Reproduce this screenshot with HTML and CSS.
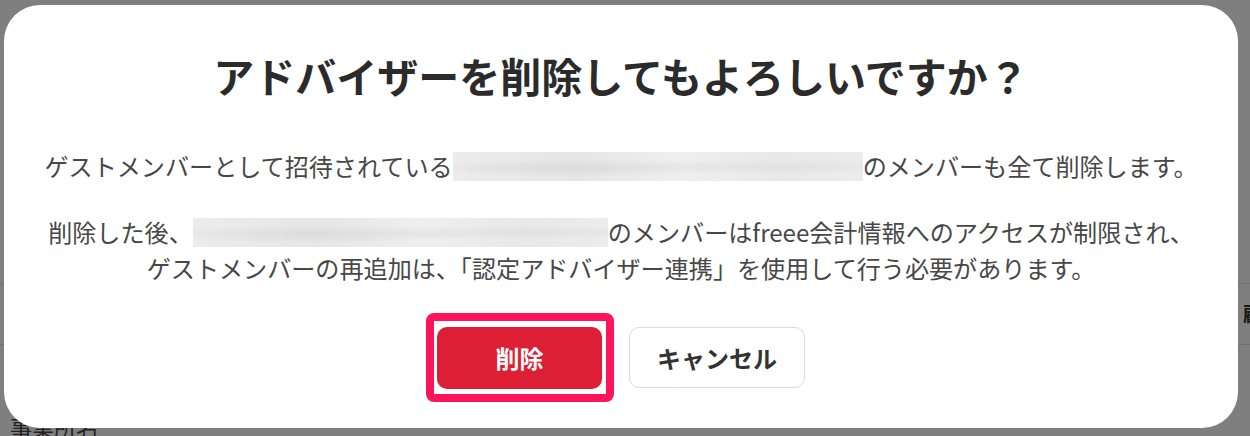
FILE: index.html
```html
<!DOCTYPE html>
<html lang="ja">
<head>
<meta charset="utf-8">
<title>アドバイザー削除</title>
<link rel="stylesheet" href="styles.css">
</head>
<body>
<div class="page">
  <div class="page-row">
    <div class="page-cell"></div>
    <div class="page-cell page-cell-head">顧問先</div>
  </div>
  <div class="page-label">事業所名</div>
</div>
<div class="overlay">
  <div class="modal" role="dialog" aria-modal="true">
    <h1 class="modal-title">アドバイザーを削除してもよろしいですか？</h1>
    <p class="modal-text">ゲストメンバーとして招待されている<span class="redacted redacted-a"></span>のメンバーも全て削除します。</p>
    <p class="modal-text modal-text-second">削除した後、<span class="redacted redacted-b"></span>のメンバーはfreee会計情報へのアクセスが制限され、<br>ゲストメンバーの再追加は、「認定アドバイザー連携」を使用して行う必要があります。</p>
    <div class="modal-actions">
      <span class="highlight"><button class="btn btn-danger" type="button">削除</button></span>
      <button class="btn btn-secondary" type="button">キャンセル</button>
    </div>
  </div>
</div>
</body>
</html>
```
FILE: styles.css
```css
html, body {
  margin: 0;
  padding: 0;
}
body {
  width: 1250px;
  height: 436px;
  overflow: hidden;
  background: #ffffff;
  font-family: "Noto Sans CJK JP", "Noto Sans", sans-serif;
}
.page {
  height: 436px;
  overflow: hidden;
}
.page-row {
  display: grid;
  grid-template-columns: 1243px 1fr;
  height: 60px;
  margin-top: 283px;
  border-top: 1px solid #e6e6e6;
  border-bottom: 1px solid #e6e6e6;
}
.page-cell-head {
  font-size: 20px;
  font-weight: 700;
  line-height: 60px;
  color: #333333;
  white-space: nowrap;
  overflow: hidden;
}
.page-label {
  margin-top: 66px;
  padding-left: 10px;
  font-size: 22px;
  line-height: 30px;
  color: #444444;
  white-space: nowrap;
}
.overlay {
  position: fixed;
  inset: 0;
  background: rgba(0, 0, 0, 0.5);
  display: flex;
  padding: 5px 12px 8px 4px;
  box-sizing: border-box;
}
.modal {
  flex: 1;
  background: #ffffff;
  border-radius: 36px;
  display: flex;
  flex-direction: column;
  align-items: center;
  padding-top: 42px;
  box-sizing: border-box;
}
.modal-title {
  margin: 0;
  font-size: 41px;
  line-height: 56px;
  font-weight: 700;
  color: #2b2b2b;
}
.modal-text {
  margin: 45px 0 0;
  font-size: 24.1px;
  line-height: 36px;
  color: #474747;
  text-align: center;
  white-space: nowrap;
}
.modal-text-second {
  margin-top: 30px;
}
.redacted {
  display: inline-block;
  height: 29px;
  vertical-align: -5px;
  background:
    radial-gradient(ellipse at 30% 55%, rgba(215, 215, 215, 0.7), rgba(215, 215, 215, 0) 40%),
    radial-gradient(ellipse at 80% 50%, rgba(220, 220, 220, 0.6), rgba(220, 220, 220, 0) 35%),
    linear-gradient(90deg, #ececec, #e6e6e6 30%, #efefef 55%, #e8e8e8 80%, #ececec);
  filter: blur(0.6px);
}
.redacted-a {
  width: 410px;
}
.redacted-b {
  width: 415px;
}
.modal-actions {
  margin-top: 41px;
  display: flex;
  gap: 27px;
}
.highlight {
  position: relative;
  display: flex;
}
.highlight::after {
  content: "";
  position: absolute;
  top: -14px;
  left: -11px;
  right: -12px;
  bottom: -13px;
  border: 8px solid #ff135b;
  border-radius: 8px;
  pointer-events: none;
}
.btn {
  height: 62px;
  border-radius: 10px;
  font-family: "Noto Sans CJK JP", "Noto Sans", sans-serif;
  font-size: 24px;
  font-weight: 700;
  line-height: 1;
  padding: 0;
  cursor: pointer;
}
.btn-danger {
  width: 165px;
  background: #dc1f34;
  border: none;
  color: #ffffff;
}
.btn-secondary {
  width: 176px;
  height: 61px;
  background: #ffffff;
  border: 1px solid #dadada;
  color: #333333;
}
```
